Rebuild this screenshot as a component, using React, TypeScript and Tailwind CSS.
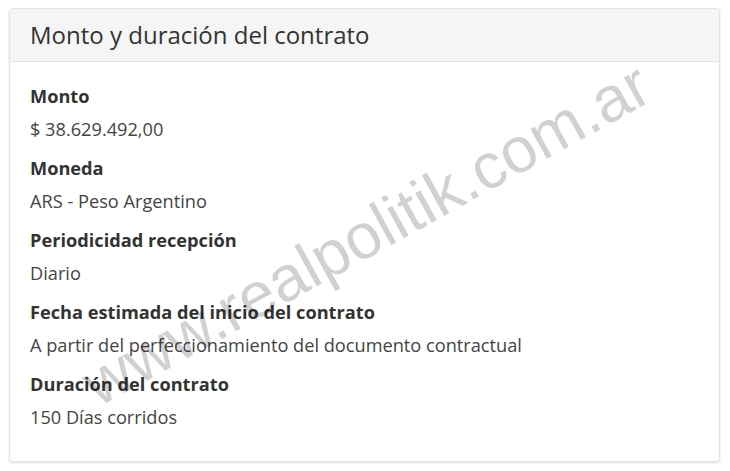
import React from 'react'

const fields = [
	{ label: 'Monto', value: '$ 38.629.492,00' },
	{ label: 'Moneda', value: 'ARS - Peso Argentino' },
	{ label: 'Periodicidad recepción', value: 'Diario' },
	{ label: 'Fecha estimada del inicio del contrato', value: 'A partir del perfeccionamiento del documento contractual' },
	{ label: 'Duración del contrato', value: '150 Días corridos' },
]

const App: React.FC = () => {
	return (
		<div className="relative w-[730px] h-[471px] bg-white overflow-hidden font-['Open_Sans',sans-serif] text-[#333]">
			<div className="ml-[9px] mt-[8px] w-[711px] h-[454px] rounded-[4px] border border-[#e3e3e3] bg-white shadow-[0_1px_3px_rgba(0,0,0,0.12)] overflow-hidden">
				<div className="h-[53px] bg-[#f5f5f5] border-b border-[#e2e2e2] px-[20px] flex items-center">
					<h2 className="text-[24px] leading-none text-[#333]">Monto y duración del contrato</h2>
				</div>
				<div className="px-[20px] pt-[22px]">
					{fields.map(f => (
						<div key={f.label} className="mb-[15px]">
							<div className="text-[18.2px] leading-[24px] font-bold text-[#333] mb-[9px]">{f.label}</div>
							<div className="text-[18.2px] leading-[24px] text-[#444]">{f.value}</div>
						</div>
					))}
				</div>
			</div>
			{/* watermark */}
			<div className="absolute left-[366px] top-[234px] pointer-events-none">
				<div className="-translate-x-1/2 -translate-y-1/2 -rotate-[29deg] whitespace-nowrap font-['Liberation_Sans',Arial,sans-serif] text-[64px] leading-none text-black/[0.18]">
					www.realpolitik.com.ar
				</div>
			</div>
		</div>
	)
}

export default App
